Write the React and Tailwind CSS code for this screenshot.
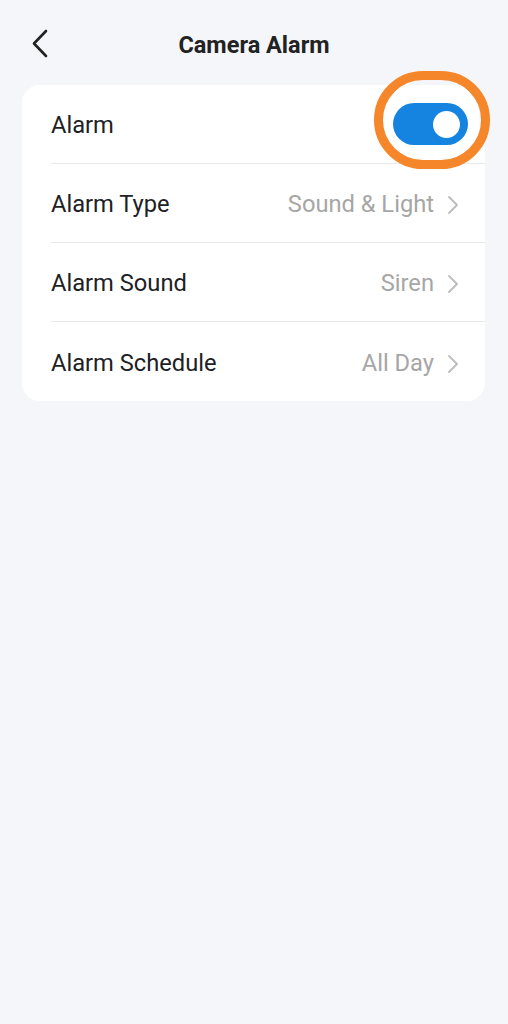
import React, { useState } from 'react';

function Chevron({ className }) {
  return (
    <svg className={className} width="14" height="20" viewBox="0 0 14 20" fill="none">
      <path d="M3 2l8 8-8 8" stroke="currentColor" strokeWidth="1.8" strokeLinecap="round" strokeLinejoin="round" />
    </svg>
  );
}

function Row({ label, value, last }) {
  return (
    <div className="flex h-[79px] items-center pl-[29px]">
      <div className={`flex h-full flex-1 items-center pr-[25px] pt-[4px] ${last ? '' : 'border-b border-[#e8e8ea]'}`}>
        <span className="flex-1 text-[23.7px] text-[#202124]">{label}</span>
        <span className="text-[23.7px] text-[#a6a6a6]">{value}</span>
        <Chevron className="ml-[12px] text-[#bcbcbc]" />
      </div>
    </div>
  );
}

export default function App() {
  const [on, setOn] = useState(true);

  return (
    <div className="min-h-screen bg-[#f4f6fa] font-['Roboto',sans-serif]">
      {/* Header */}
      <div className="relative flex h-[85px] items-center justify-center">
        <button className="absolute left-[30px] top-[28px] text-[#222]">
          <svg width="20" height="32" viewBox="0 0 20 32" fill="none">
            <path d="M16 3L4 15.5 16 28" stroke="currentColor" strokeWidth="2.6" strokeLinecap="round" strokeLinejoin="round" />
          </svg>
        </button>
        <h1 className="pt-[6px] text-[23.5px] font-bold text-[#222]">Camera Alarm</h1>
      </div>

      {/* Settings card */}
      <div className="ml-[22px] mr-[23px] rounded-[18px] bg-white">
        <div className="flex h-[79px] items-center pl-[29px]">
          <div className="relative flex h-full flex-1 items-center border-b border-[#e8e8ea] pr-[17px]">
            <span className="flex-1 pt-[4px] text-[23.7px] text-[#202124]">Alarm</span>
            <button
              onClick={() => setOn(!on)}
              className={`flex h-[42px] w-[75px] items-center rounded-full px-[8px] ${on ? 'justify-end bg-[#1584e0]' : 'justify-start bg-[#d6d6d6]'}`}
            >
              <span className="h-[27px] w-[27px] rounded-full bg-white" />
            </button>
            {/* annotation ring */}
            <div className="pointer-events-none absolute right-[-5px] top-[-14px] h-[98px] w-[116px] rounded-full border-[9px] border-[#f5862a]" />
          </div>
        </div>
        <Row label="Alarm Type" value="Sound & Light" />
        <Row label="Alarm Sound" value="Siren" />
        <Row label="Alarm Schedule" value="All Day" last />
      </div>
    </div>
  );
}
